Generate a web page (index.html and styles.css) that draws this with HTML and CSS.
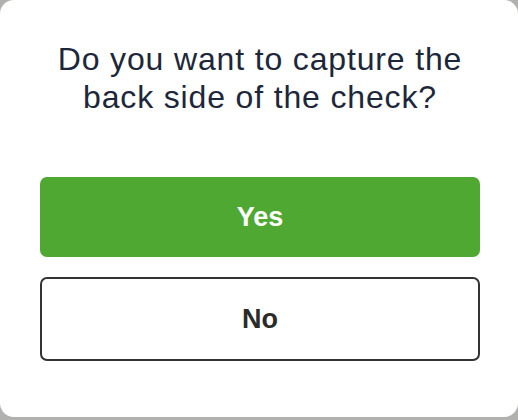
FILE: index.html
```html
<!DOCTYPE html>
<html lang="en">
<head>
  <meta charset="UTF-8">
  <meta name="viewport" content="width=device-width, initial-scale=1.0">
  <title>Capture Back Side</title>
  <link rel="stylesheet" href="styles.css">
</head>
<body>
  <div class="dialog">
    <h1 class="dialog-title">Do you want to capture the back side of the check?</h1>
    <div class="actions">
      <button class="btn btn-primary">Yes</button>
      <button class="btn btn-outline">No</button>
    </div>
  </div>
</body>
</html>
```

FILE: styles.css
```css
body {
  margin: 0;
  background: #b1b1af;
  font-family: 'Liberation Sans', Arial, sans-serif;
}

.dialog {
  box-sizing: border-box;
  width: 518px;
  height: 417px;
  background: #fff;
  border-radius: 14px;
  padding: 41px 38px 0 40px;
  text-align: center;
}

.dialog-title {
  margin: 0 0 61px;
  font-size: 32px;
  font-weight: normal;
  line-height: 37.5px;
  letter-spacing: 0.85px;
  color: #1d273a;
}

.actions {
  display: flex;
  flex-direction: column;
  gap: 20px;
}

.btn {
  display: flex;
  justify-content: center;
  align-items: center;
  width: 440px;
  font-family: inherit;
  font-size: 27px;
  font-weight: bold;
  border-radius: 7px;
  cursor: pointer;
}

.btn-primary {
  height: 80px;
  background: #4ea832;
  color: #fff;
  border: none;
}

.btn-outline {
  height: 84px;
  background: #fff;
  color: #2b2b2b;
  border: 2px solid #333;
}
```
